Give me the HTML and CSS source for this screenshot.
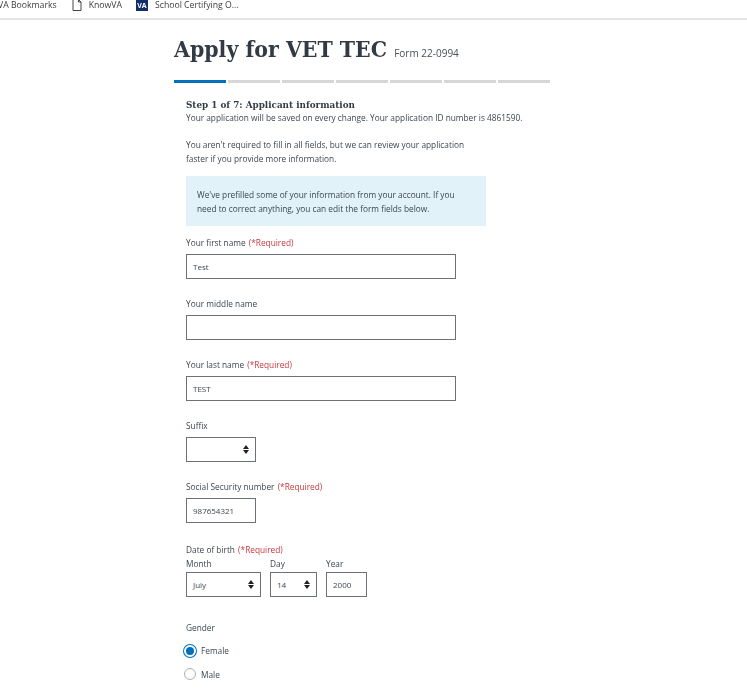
FILE: index.html
```html
<!DOCTYPE html>
<html lang="en">

<head>
    <meta charset="UTF-8">
    <meta name="viewport" content="width=device-width, initial-scale=1.0">
    <title>Apply for VET TEC</title>
    <link rel="stylesheet" href="styles.css">
</head>

<body>
    <nav class="bookmarks">
        <span class="bookmark bookmark-first">VA Bookmarks</span>
        <span class="bookmark">
            <svg class="page-icon" width="10" height="12" viewBox="0 0 10 12">
                <path d="M1 .5h5.5L9 3v8.5H1zM6.5 .5V3H9" fill="none" stroke="#444" stroke-width="1"/>
            </svg>
            KnowVA
        </span>
        <span class="bookmark">
            <span class="va-icon">VA</span>
            School Certifying O...
        </span>
    </nav>

    <main class="page">
        <h1 class="title">Apply for VET TEC <small class="form-number">Form 22-0994</small></h1>

        <div class="progress">
            <span class="segment segment-current"></span>
            <span class="segment"></span>
            <span class="segment"></span>
            <span class="segment"></span>
            <span class="segment"></span>
            <span class="segment"></span>
            <span class="segment"></span>
        </div>

        <form class="form">
            <h2 class="step-title">Step 1 of 7: Applicant information</h2>
            <p class="saved-note">Your application will be saved on every change. Your application ID number is 4861590.</p>
            <p class="intro">You aren't required to fill in all fields, but we can review your application<br>faster if you provide more information.</p>

            <div class="prefill">We've prefilled some of your information from your account. If you<br>need to correct anything, you can edit the form fields below.</div>

            <div class="field field-first">
                <label class="label">Your first name <span class="required">(*Required)</span></label>
                <div class="input input-wide">Test</div>
            </div>
            <div class="field">
                <label class="label">Your middle name</label>
                <div class="input input-wide"></div>
            </div>
            <div class="field">
                <label class="label">Your last name <span class="required">(*Required)</span></label>
                <div class="input input-wide">TEST</div>
            </div>
            <div class="field">
                <label class="label">Suffix</label>
                <div class="input input-short select"></div>
            </div>
            <div class="field">
                <label class="label">Social Security number <span class="required">(*Required)</span></label>
                <div class="input input-short">987654321</div>
            </div>

            <div class="field field-date">
                <label class="label label-date">Date of birth <span class="required">(*Required)</span></label>
                <div class="date-row">
                    <div class="date-part">
                        <label class="label label-part">Month</label>
                        <div class="input input-month select">July</div>
                    </div>
                    <div class="date-part">
                        <label class="label label-part">Day</label>
                        <div class="input input-day select">14</div>
                    </div>
                    <div class="date-part">
                        <label class="label label-part">Year</label>
                        <div class="input input-year">2000</div>
                    </div>
                </div>
            </div>

            <div class="field field-gender">
                <label class="label label-gender">Gender</label>
                <div class="radio-row">
                    <span class="radio radio-checked"></span>
                    <span>Female</span>
                </div>
                <div class="radio-row">
                    <span class="radio"></span>
                    <span>Male</span>
                </div>
            </div>
        </form>
    </main>
</body>

</html>
```

FILE: styles.css
```css
*, *::before, *::after {
    box-sizing: border-box;
}

html, body {
    height: 691px;
    overflow: hidden;
}

body {
    margin: 0;
    padding: 0;
    background-color: #ffffff;
    color: #3d4551;
    font-family: 'Open Sans', 'Noto Sans', sans-serif;
    font-size: 8.3px;
    filter: blur(0.3px);
}

.bookmarks {
    display: flex;
    align-items: center;
    height: 20px;
    padding-bottom: 8px;
    background: #ffffff;
    border-bottom: 2px solid #e4e4e4;
    font-size: 8.7px;
    color: #3c3c3c;
}

.bookmark {
    display: flex;
    align-items: center;
    gap: 7px;
    margin-right: 14px;
}

.bookmark-first {
    margin-left: -2px;
    margin-right: 15px;
}

.va-icon {
    display: flex;
    align-items: center;
    justify-content: center;
    width: 12px;
    height: 12px;
    background: #112e6b;
    color: #ffffff;
    font-size: 7px;
    font-weight: 700;
}

.page {
    width: 376px;
    margin-left: 174px;
}

.title {
    margin: 14px 0 0;
    font-family: 'DejaVu Serif Condensed', 'DejaVu Serif', serif;
    font-size: 22.8px;
    font-weight: 700;
    line-height: 30px;
    color: #323a45;
}

.form-number {
    font-family: 'Open Sans', 'Noto Sans', sans-serif;
    font-size: 10px;
    font-weight: 400;
    color: #4a4f57;
}

.progress {
    display: flex;
    gap: 2px;
    margin-top: 12px;
}

.segment {
    flex: 1;
    height: 3px;
    background: #d6d7d9;
}

.segment-current {
    background: #0071bb;
}

.form {
    padding-left: 12px;
}

.step-title {
    margin: 16px 0 0;
    font-family: 'DejaVu Serif Condensed', 'DejaVu Serif', serif;
    font-size: 9.8px;
    font-weight: 700;
    line-height: 11px;
    color: #323a45;
}

.saved-note {
    margin: 2px 0 0;
    line-height: 12px;
}

.intro {
    margin: 14px 0 0;
    width: 300px;
    line-height: 14px;
}

.prefill {
    width: 300px;
    height: 50px;
    margin-top: 10px;
    padding: 12px 11px;
    background: #e1f3f8;
    line-height: 14px;
}

.field {
    margin-top: 18px;
}

.field-first {
    margin-top: 10px;
}

.field-date {
    margin-top: 20px;
}

.field-gender {
    margin-top: 24px;
}

.label {
    display: block;
    height: 12px;
    margin-bottom: 6px;
    line-height: 14px;
}

.label-date {
    margin-bottom: 3px;
}

.label-part {
    margin-bottom: 2px;
    line-height: 12px;
}

.label-gender {
    margin-bottom: 11px;
}

.required {
    margin-left: 1px;
    color: #c8383e;
}

.input {
    display: flex;
    align-items: center;
    height: 25px;
    padding: 0 6px;
    background: #ffffff;
    border: 1px solid #6b7079;
    font-size: 8px;
}

.input-wide {
    width: 270px;
}

.input-short {
    width: 70px;
}

.input-month {
    width: 75px;
}

.input-day {
    width: 47px;
}

.input-year {
    width: 41px;
}

.select {
    position: relative;
}

/* up and down arrows of the native select */
.select::before,
.select::after {
    content: "";
    position: absolute;
    right: 6px;
    border-left: 3.5px solid transparent;
    border-right: 3.5px solid transparent;
}

.select::before {
    top: 7px;
    border-bottom: 4px solid #212121;
}

.select::after {
    bottom: 7px;
    border-top: 4px solid #212121;
}

.date-row {
    display: flex;
    gap: 9px;
}

.radio-row {
    display: flex;
    align-items: center;
    gap: 5px;
    height: 13px;
    margin-bottom: 10.5px;
    margin-left: -2px;
}

.radio {
    width: 12px;
    height: 12px;
    background: #ffffff;
    border: 1px solid #aeb0b5;
    border-radius: 50%;
}

.radio-checked {
    background: #0071bb;
    border: 2px solid #ffffff;
    box-shadow: 0 0 0 1px #0071bb;
}
```
